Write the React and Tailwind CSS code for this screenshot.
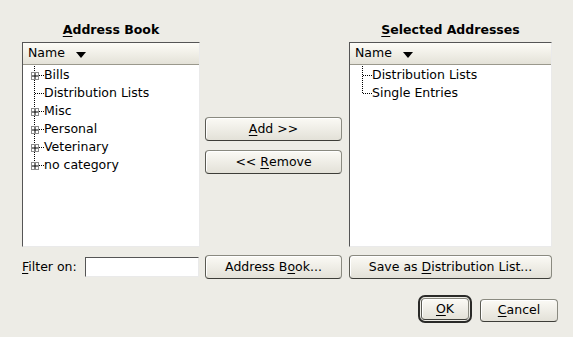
import React from "react";

const font = { fontFamily: '"DejaVu Sans", Verdana, sans-serif' };

const Btn = ({ children, className = "", focus = false }) => (
  <div
    className={`flex items-center justify-center rounded-[4px] border border-[#8a8a80] border-b-[#3d3d38] border-l-[#5a5a52] bg-gradient-to-b from-[#fbfaf5] to-[#e3e1d8] text-[12.5px] text-black shadow-[inset_1px_1px_0_#ffffff] ${
      focus ? "outline outline-2 outline-[#2a2a28] outline-offset-[1px]" : ""
    } ${className}`}
  >
    {children}
  </div>
);

const TreeRow = ({ label, expander, last }) => (
  <div className="flex h-[18px] items-center">
    <svg width="17" height="18" className="shrink-0">
      <line x1="7.5" y1="0" x2="7.5" y2={last ? 9 : 18} stroke="#000" strokeDasharray="1 1" />
      <line x1="8" y1="9.5" x2="17" y2="9.5" stroke="#000" strokeDasharray="1 1" />
      {expander && (
        <>
          <rect x="4.5" y="6.5" width="7" height="7" fill="#fff" stroke="#8c8c8c" />
          <line x1="5" y1="10" x2="11" y2="10" stroke="#000" />
          <line x1="8" y1="7" x2="8" y2="13" stroke="#000" />
        </>
      )}
    </svg>
    <span className="text-[12.5px] leading-none">{label}</span>
  </div>
);

const ListBox = ({ width, items, indent }) => (
  <div
    className="flex h-[205px] flex-col border border-[#555] border-r-[#eaeaea] border-b-[#eaeaea] bg-white"
    style={{ width }}
  >
    <div className="flex h-[22px] items-center border-b border-[#9a988c] bg-gradient-to-b from-[#fdfcf7] to-[#e4e2d8] pl-[5px] text-[12.5px]">
      Name
      <svg width="10" height="6" className="ml-[11px] mt-[3px]">
        <polygon points="0,0 10,0 5,6" fill="#000" />
      </svg>
    </div>
    <div className="pt-[1px]" style={{ paddingLeft: indent }}>
      {items.map((it, i) => (
        <TreeRow key={it.label} label={it.label} expander={it.exp} last={i === items.length - 1} />
      ))}
    </div>
  </div>
);

export default function App() {
  const left = [
    { label: "Bills", exp: true },
    { label: "Distribution Lists" },
    { label: "Misc", exp: true },
    { label: "Personal", exp: true },
    { label: "Veterinary", exp: true },
    { label: "no category", exp: true },
  ];
  const right = [{ label: "Distribution Lists" }, { label: "Single Entries" }];

  return (
    <div className="h-[337px] w-[573px] bg-[#edece6] text-black" style={font}>
      <div className="flex pl-[22px] pt-[21px]">
        <div className="flex w-[178px] flex-col">
          <div className="mb-[4px] text-center text-[12.5px] font-bold leading-[17px]">
            <span className="underline underline-offset-2">A</span>ddress Book
          </div>
          <ListBox width={178} items={left} indent={4} />
        </div>

        <div className="ml-[5px] flex w-[137px] flex-col pt-[96px]">
          <Btn className="h-[24px]">
            <span className="underline underline-offset-2">A</span>dd &gt;&gt;
          </Btn>
          <Btn className="mt-[9px] h-[24px]">
            &lt;&lt; <span className="ml-[4px] underline underline-offset-2">R</span>emove
          </Btn>
        </div>

        <div className="ml-[7px] flex w-[203px] flex-col">
          <div className="mb-[4px] text-center text-[12.5px] font-bold leading-[17px]">
            <span className="underline underline-offset-2">S</span>elected Addresses
          </div>
          <ListBox width={203} items={right} indent={5} />
        </div>
      </div>

      <div className="mt-[8px] flex items-center pl-[22px]">
        <div className="flex w-[177px] items-center">
          <span className="text-[12.5px]">
            <span className="underline underline-offset-2">F</span>ilter on:
          </span>
          <div className="ml-auto h-[20px] w-[114px] border border-[#555] border-r-[#eaeaea] border-b-[#eaeaea] bg-white" />
        </div>
        <Btn className="ml-[6px] h-[24px] w-[137px]">
          Address B<span className="underline underline-offset-2">o</span>ok...
        </Btn>
        <Btn className="ml-[7px] h-[24px] w-[203px]">
          Save as <span className="ml-[4px] underline underline-offset-2">D</span>istribution List...
        </Btn>
      </div>

      <div className="mt-[19px] flex justify-end gap-[11px] pr-[15px]">
        <Btn focus className="h-[22px] w-[48px]">
          <span className="underline underline-offset-2">O</span>K
        </Btn>
        <Btn className="mt-[1px] h-[23px] w-[78px]">
          <span className="underline underline-offset-2">C</span>ancel
        </Btn>
      </div>
    </div>
  );
}
